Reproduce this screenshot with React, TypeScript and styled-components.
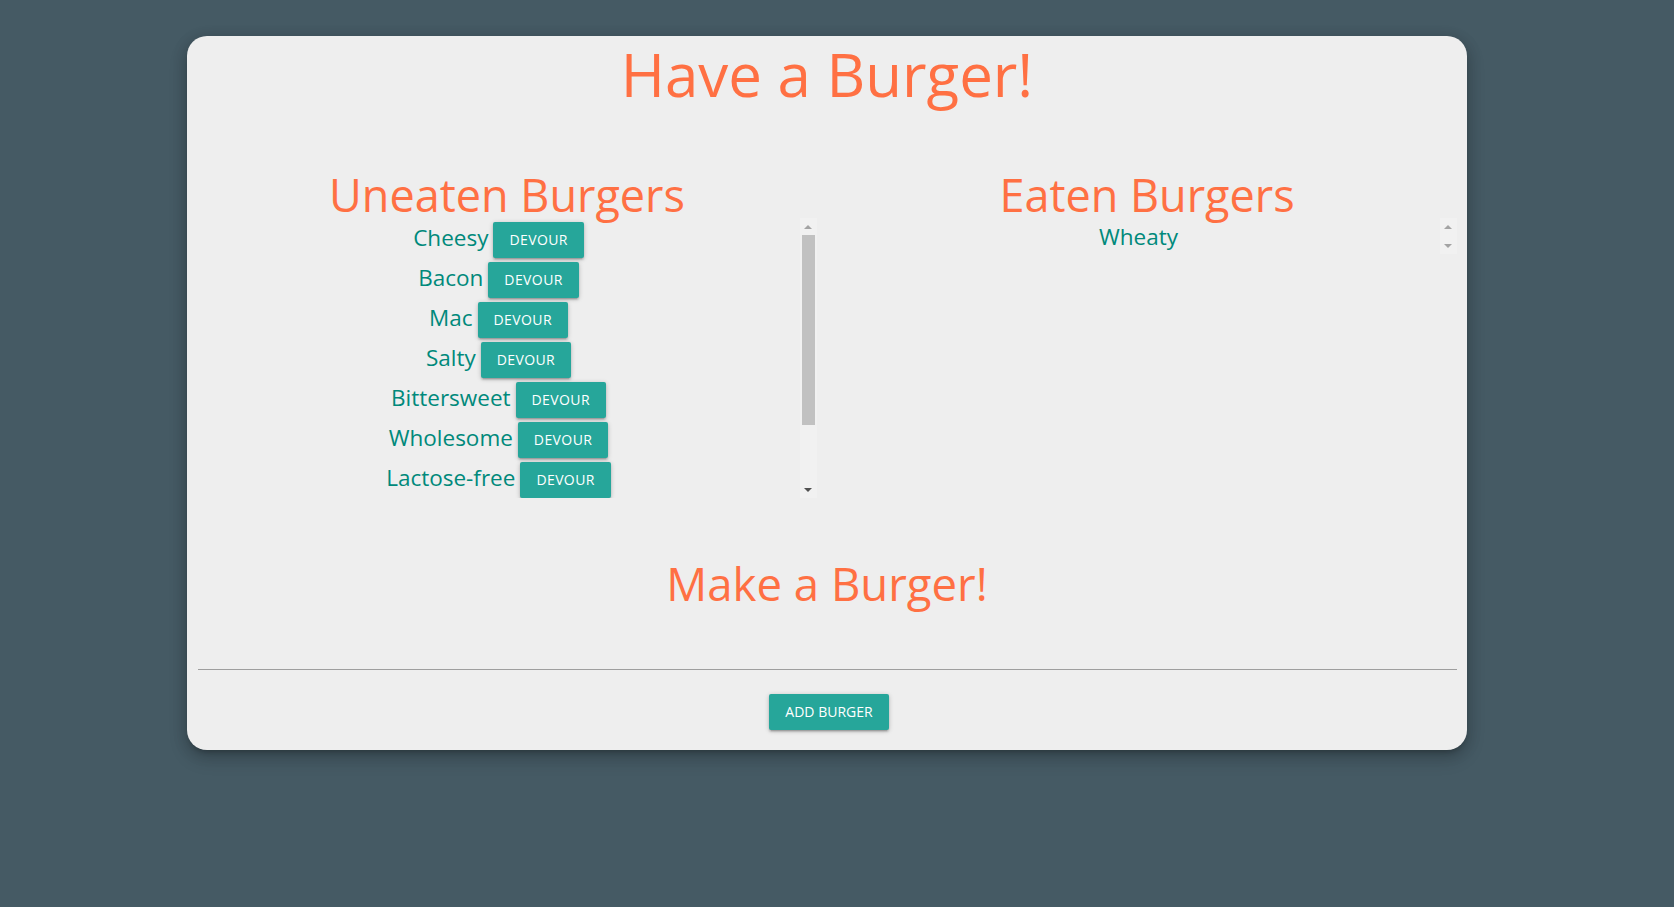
import React from "react";
import styled, { createGlobalStyle } from "styled-components";

const GlobalStyle = createGlobalStyle`
  html, body {
    margin: 0;
    padding: 0;
  }
  body {
    background: #455a64;
    min-height: 100vh;
    font-family: "Open Sans", "Noto Sans", sans-serif;
  }
  *, *::before, *::after {
    box-sizing: border-box;
  }
`;

const Page = styled.div`
  padding: 36px 0 40px;
`;

const Card = styled.main`
  width: 1280px;
  margin-left: 187px;
  background: #eeeeee;
  border-radius: 20px;
  padding: 5px 0 20px;
  box-shadow: 0 8px 17px 2px rgba(0, 0, 0, 0.14),
    0 3px 14px 2px rgba(0, 0, 0, 0.12), 0 5px 5px -3px rgba(0, 0, 0, 0.2);
`;

const Title = styled.h1`
  margin: 0;
  font-size: 60px;
  line-height: 66px;
  font-weight: 400;
  color: #ff7043;
  text-align: center;
`;

const Columns = styled.section`
  display: grid;
  grid-template-columns: 1fr 1fr;
  align-items: start;
  margin-top: 65px;
`;

const Column = styled.div`
  padding: 0 10.5px;
`;

const SectionTitle = styled.h3<{ $top?: number; $size?: number }>`
  margin: ${(p) => p.$top ?? 0}px 0 1px;
  font-size: ${(p) => p.$size ?? 45}px;
  line-height: 45px;
  font-weight: 400;
  color: #ff7043;
  text-align: center;
`;

const ListBox = styled.div<{ $h: number }>`
  display: flex;
  height: ${(p) => p.$h}px;
`;

const BurgerList = styled.ul<{ $pt: number }>`
  flex: 1;
  min-width: 0;
  list-style: none;
  margin: 0;
  padding: ${(p) => p.$pt}px 0 0;
  overflow: hidden;
`;

const Scrollbar = styled.div`
  width: 17px;
  flex: none;
  display: flex;
  flex-direction: column;
  background: #f1f1f1;
`;

const ScrollButton = styled.div<{ $dir: "up" | "down"; $color: string }>`
  height: 17px;
  flex: none;
  display: flex;
  align-items: center;
  justify-content: center;

  &::before {
    content: "";
    width: 0;
    height: 0;
    border-left: 4px solid transparent;
    border-right: 4px solid transparent;
    ${(p) =>
      p.$dir === "up"
        ? `border-bottom: 4px solid ${p.$color};`
        : `border-top: 4px solid ${p.$color};`}
  }
`;

const Track = styled.div`
  flex: 1;
  min-height: 0;
  overflow: hidden;
`;

const Thumb = styled.div<{ $h: number }>`
  height: ${(p) => p.$h}px;
  margin: 0 2px;
  background: #c1c1c1;
`;

const Row = styled.li<{ $h: number }>`
  height: ${(p) => p.$h}px;
  line-height: ${(p) => p.$h}px;
  display: flex;
  justify-content: center;
  align-items: center;
  gap: 5px;
`;

const Name = styled.span<{ $lift?: number }>`
  font-size: 22.5px;
  color: #00897b;
  white-space: nowrap;
  padding-bottom: ${(p) => (p.$lift ?? 0) * 2}px;
`;

const Button = styled.button`
  height: 36px;
  line-height: 36px;
  padding: 0 16px;
  border: none;
  border-radius: 2px;
  background: #26a69a;
  color: #ffffff;
  font-family: "Open Sans", "Noto Sans", sans-serif;
  font-size: 14px;
  letter-spacing: 0.4px;
  text-transform: uppercase;
  cursor: pointer;
  white-space: nowrap;
  box-shadow: 0 2px 2px 0 rgba(0, 0, 0, 0.14), 0 3px 1px -2px rgba(0, 0, 0, 0.12),
    0 1px 5px 0 rgba(0, 0, 0, 0.2);
`;

const Form = styled.form`
  display: flex;
  flex-direction: column;
  align-items: center;
  padding: 0 10.5px;
  margin-top: 19px;
`;

const Input = styled.input`
  width: 100%;
  height: 45px;
  border: none;
  border-bottom: 1px solid #9e9e9e;
  background: transparent;
  outline: none;
  font-family: "Open Sans", "Noto Sans", sans-serif;
  font-size: 16px;
  color: #333;
  padding: 0;
`;

const AddButton = styled(Button)`
  margin-top: 24px;
  letter-spacing: 0;
  transform: translateX(2px);
`;

const uneaten = [
  "Cheesy",
  "Bacon",
  "Mac",
  "Salty",
  "Bittersweet",
  "Wholesome",
  "Lactose-free",
];

const eaten = ["Wheaty"];

// visible box height / full content height of the uneaten list
const UNEATEN_BOX = 280;
const UNEATEN_CONTENT = 362;

export default function App() {
  const track = UNEATEN_BOX - 34;
  const thumb = Math.round((track * UNEATEN_BOX) / UNEATEN_CONTENT);
  return (
    <>
      <GlobalStyle />
      <Page>
        <Card>
          <Title>Have a Burger!</Title>
          <Columns>
            <Column>
              <SectionTitle>Uneaten Burgers</SectionTitle>
              <ListBox $h={UNEATEN_BOX}>
                <BurgerList $pt={2}>
                  {uneaten.map((b) => (
                    <Row key={b} $h={40}>
                      <Name $lift={2}>{b}</Name>
                      <Button type="button">Devour</Button>
                    </Row>
                  ))}
                </BurgerList>
                <Scrollbar aria-hidden>
                  <ScrollButton $dir="up" $color="#a3a3a3" />
                  <Track>
                    <Thumb $h={thumb} />
                  </Track>
                  <ScrollButton $dir="down" $color="#505050" />
                </Scrollbar>
              </ListBox>
            </Column>
            <Column>
              <SectionTitle>Eaten Burgers</SectionTitle>
              <ListBox $h={36}>
                <BurgerList $pt={2}>
                  {eaten.map((b) => (
                    <Row key={b} $h={34}>
                      <Name>{b}</Name>
                    </Row>
                  ))}
                </BurgerList>
                <Scrollbar aria-hidden>
                  <ScrollButton $dir="up" $color="#a3a3a3" />
                  <Track />
                  <ScrollButton $dir="down" $color="#a3a3a3" />
                </Scrollbar>
              </ListBox>
            </Column>
          </Columns>
          <SectionTitle $top={63} $size={45.5}>Make a Burger!</SectionTitle>
          <Form onSubmit={(e) => e.preventDefault()}>
            <Input type="text" aria-label="Burger name" />
            <AddButton type="submit">Add Burger</AddButton>
          </Form>
        </Card>
      </Page>
    </>
  );
}
